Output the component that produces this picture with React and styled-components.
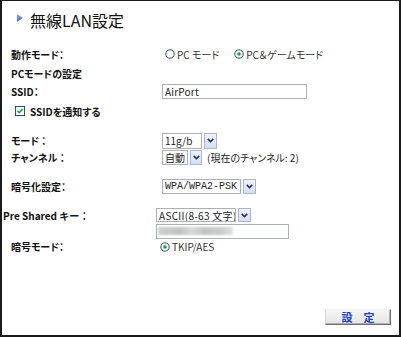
import React from "react";
import styled, { createGlobalStyle } from "styled-components";

const Global = createGlobalStyle`
  html, body { margin: 0; padding: 0; background: #fff; }
  body { font-family: "Noto Sans CJK JP", "Noto Sans", sans-serif; }
`;

const Frame = styled.div`
  box-sizing: border-box;
  width: 401px;
  height: 337px;
  border: 2px solid #1a1a1a;
  border-top-width: 1px;
  padding: 0 0 0 1px;
  display: flex;
  flex-direction: column;
  color: #111;
  font-size: 10px;
  font-feature-settings: "palt";
`;

const Title = styled.h1`
  margin: 0;
  box-sizing: border-box;
  height: 43px;
  padding: 0 0 6px 14px;
  display: flex;
  align-items: center;
  gap: 7px;
  font-size: 16px;
  font-weight: normal;
  font-feature-settings: normal;
  color: #111;
`;

const Form = styled.div`
  display: flex;
  flex-direction: column;
`;

const Row = styled.div`
  box-sizing: border-box;
  height: ${(p) => p.$h}px;
  margin-top: ${(p) => p.$mt || 0}px;
  padding-left: ${(p) => (p.$pad ?? 8)}px;
  display: grid;
  grid-template-columns: ${(p) => (p.$col ? `${p.$col}px 1fr` : "1fr")};
  align-items: center;
`;

const Label = styled.span`
  font-weight: bold;
  white-space: nowrap;
  font-feature-settings: ${(p) => (p.$wide ? "normal" : "inherit")};
`;

const Controls = styled.div`
  display: flex;
  align-items: center;
  gap: ${(p) => p.$gap || 0}px;
  height: 100%;
`;

const OptionItem = styled.label`
  display: inline-flex;
  align-items: center;
  gap: 2px;
  color: #333;
  white-space: nowrap;
`;

const CheckItem = styled.label`
  display: inline-flex;
  align-items: center;
  gap: 5px;
  font-weight: bold;
  white-space: nowrap;
`;

const TextField = styled.div`
  box-sizing: border-box;
  width: ${(p) => p.$w}px;
  height: 15px;
  border: 1px solid #a9b0b8;
  background: #fff;
  padding: 0 ${(p) => (p.$pl ?? 2)}px;
  display: flex;
  align-items: center;
  color: #222;
  letter-spacing: 0.2px;
`;

const Blur = styled.span`
  display: block;
  width: 75px;
  height: 8px;
  background: linear-gradient(90deg, #cfcfcf 0%, #c2c2c2 30%, #dadada 45%, #c4c4c4 60%, #cbcbcb 85%, #e2e2e2 100%);
  filter: blur(1.2px);
`;

const SelectWrap = styled.div`
  display: inline-flex;
  gap: 2px;
  height: ${(p) => p.$h || 15}px;
`;

const SelectValue = styled.span`
  box-sizing: border-box;
  width: ${(p) => p.$w}px;
  height: 100%;
  border: 1px solid #a9b0b8;
  background: #fff;
  padding-left: 2px;
  display: flex;
  align-items: center;
  white-space: nowrap;
  overflow: hidden;
  color: #222;
  font-family: ${(p) => (p.$mono ? '"Liberation Mono", monospace' : "inherit")};
  letter-spacing: ${(p) => p.$ls || 0}px;
  font-feature-settings: normal;
`;

const SelectArrow = styled.span`
  box-sizing: border-box;
  width: ${(p) => p.$w || 13}px;
  height: 100%;
  border: 1px solid #a8b6d6;
  background: linear-gradient(#f1f4fc, #d3ddf3);
  display: flex;
  align-items: center;
  justify-content: center;
`;

const Note = styled.span`
  margin-left: 5px;
  color: #222;
  white-space: nowrap;
`;

const Footer = styled.div`
  margin-top: auto;
  display: flex;
  justify-content: flex-end;
  padding: 0 8px 10px 0;
`;

const SubmitButton = styled.button`
  box-sizing: border-box;
  width: 66px;
  height: 16px;
  padding: 0;
  border: 1px solid;
  border-color: #f2f2f2 #6e6e6e #6e6e6e #d8d8d8;
  box-shadow: inset -1px -1px 0 #b0b0b0;
  background: linear-gradient(#f6f6f6, #e4e4e4);
  color: #1b3fc2;
  font-family: "Noto Sans CJK JP", sans-serif;
  font-size: 11px;
  font-weight: bold;
  line-height: 14px;
  font-feature-settings: normal;
`;

const Triangle = () => (
  <svg width="6" height="8" viewBox="0 0 6 8" style={{ marginTop: -3 }}>
    <defs>
      <linearGradient id="tri" x1="0" y1="0" x2="0" y2="1">
        <stop offset="0" stopColor="#9aa6f0" />
        <stop offset="1" stopColor="#4d5fd0" />
      </linearGradient>
    </defs>
    <polygon points="0,0 6,4 0,8" fill="url(#tri)" />
  </svg>
);

const RadioIcon = ({ checked }) => (
  <svg width="10" height="10" viewBox="0 0 10 10">
    <circle cx="5" cy="5" r="4.2" fill="#fff" stroke="#2a4f7e" strokeWidth="1" />
    {checked && <circle cx="5" cy="5" r="1.8" fill="#22a32a" />}
  </svg>
);

const CheckIcon = () => (
  <svg width="10" height="10" viewBox="0 0 10 10">
    <rect x="0.5" y="0.5" width="9" height="9" fill="#fff" stroke="#2a4f7e" />
    <path d="M2.4 4.9 L4.2 6.7 L7.6 3.1" fill="none" stroke="#22a32a" strokeWidth="1.6" />
  </svg>
);

const Chevron = () => (
  <svg width="7" height="5" viewBox="0 0 7 5">
    <path d="M0.8 0.9 L3.5 3.7 L6.2 0.9" fill="none" stroke="#1d2a5c" strokeWidth="1.6" />
  </svg>
);

const Select = ({ w, h, arrowW, mono, ls, children }) => (
  <SelectWrap $h={h}>
    <SelectValue $w={w} $mono={mono} $ls={ls}>{children}</SelectValue>
    <SelectArrow $w={arrowW}><Chevron /></SelectArrow>
  </SelectWrap>
);

export default function App() {
  return (
    <>
      <Global />
      <Frame>
        <Title>
          <Triangle />
          <span>無線LAN設定</span>
        </Title>
        <Form>
          <Row $h={20} $col={154}>
            <Label>動作モード：</Label>
            <Controls $gap={15}>
              <OptionItem><RadioIcon />PC モード</OptionItem>
              <OptionItem><RadioIcon checked />PC＆ゲームモード</OptionItem>
            </Controls>
          </Row>
          <Row $h={18}>
            <Label>PCモードの設定</Label>
          </Row>
          <Row $h={19} $col={151}>
            <Label>SSID：</Label>
            <Controls>
              <TextField $w={145}>AirPort</TextField>
            </Controls>
          </Row>
          <Row $h={20} $pad={12}>
            <CheckItem><CheckIcon />SSIDを通知する</CheckItem>
          </Row>
          <Row $h={17} $mt={11} $col={151}>
            <Label>モード ：</Label>
            <Controls>
              <Select w={40} h={16}>11g/b</Select>
            </Controls>
          </Row>
          <Row $h={17} $col={151}>
            <Label>チャンネル ：</Label>
            <Controls>
              <Select w={26} arrowW={12}>自動</Select>
              <Note>(現在のチャンネル: 2)</Note>
            </Controls>
          </Row>
          <Row $h={16} $mt={12} $col={151}>
            <Label>暗号化設定：</Label>
            <Controls>
              <Select w={79} mono>WPA/WPA2-PSK</Select>
            </Controls>
          </Row>
          <Row $h={16} $mt={13} $pad={0} $col={153}>
            <Label $wide>Pre Shared キー：</Label>
            <Controls>
              <Select w={80} h={14} ls={0.3}>ASCII(8-63 文字)</Select>
            </Controls>
          </Row>
          <Row $h={16} $pad={0} $col={153}>
            <span />
            <Controls>
              <TextField $w={133} $pl={1}><Blur /></TextField>
            </Controls>
          </Row>
          <Row $h={14} $col={149}>
            <Label>暗号モード：</Label>
            <Controls>
              <OptionItem><RadioIcon checked />TKIP/AES</OptionItem>
            </Controls>
          </Row>
        </Form>
        <Footer>
          <SubmitButton type="button">設　定</SubmitButton>
        </Footer>
      </Frame>
    </>
  );
}
